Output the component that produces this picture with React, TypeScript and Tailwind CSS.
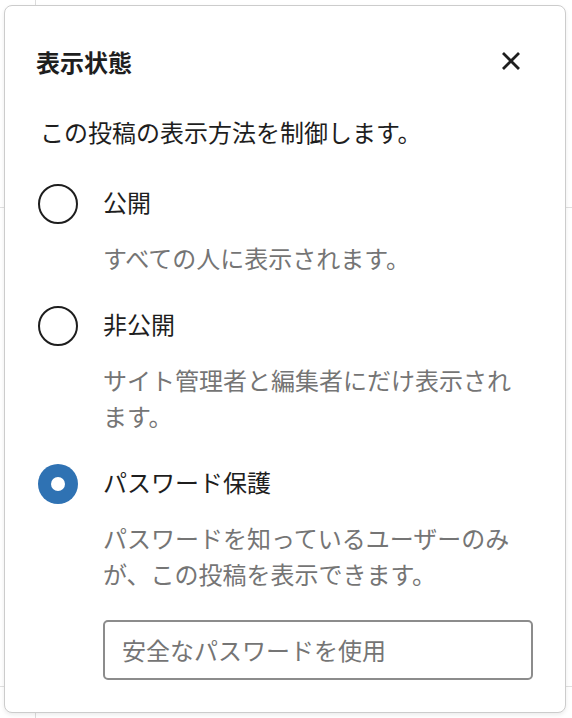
import React from "react";

const jp = { fontFamily: '"Noto Sans CJK JP", "Noto Sans", sans-serif' };

type Option = { label: string; desc: string; checked?: boolean };

const options: Option[] = [
  { label: "公開", desc: "すべての人に表示されます。" },
  { label: "非公開", desc: "サイト管理者と編集者にだけ表示されます。" },
  { label: "パスワード保護", desc: "パスワードを知っているユーザーのみが、この投稿を表示できます。", checked: true },
];

function Radio({ checked }: { checked?: boolean }) {
  if (checked) {
    return (
      <span className="w-10 h-10 rounded-full bg-[#2f72b3] flex items-center justify-center shrink-0">
        <span className="w-[14px] h-[14px] rounded-full bg-white" />
      </span>
    );
  }
  return <span className="w-10 h-10 rounded-full border-2 border-[#1e1e1e] bg-white shrink-0" />;
}

export default function App() {
  return (
    <div className="relative w-[572px] h-[718px] bg-white overflow-hidden" style={jp}>
      {/* faint editor lines behind the popover */}
      <div className="absolute left-[35px] top-0 w-px h-full bg-[#dcdcdc]" />
      <div className="absolute left-0 top-[207px] w-full h-px bg-[#e0e0e0]" />
      <div className="absolute left-0 top-[686px] w-full h-px bg-[#e0e0e0]" />

      <div className="relative mt-[5px] ml-[4px] w-[562px] h-[708px] bg-white border border-[#cccccc] rounded-lg shadow-[0_2px_4px_rgba(0,0,0,0.08)] px-8 pt-8">
        <div className="flex items-center justify-between h-12">
          <h2 className="text-[24px] font-semibold text-[#1e1e1e] -ml-px">表示状態</h2>
          <button className="w-12 h-12 flex items-center justify-center -mr-[2px] -mt-[2px]">
            <svg width="20" height="20" viewBox="0 0 20 20" fill="none">
              <path d="M2 2L18 18M18 2L2 18" stroke="#1e1e1e" strokeWidth="2.8" />
            </svg>
          </button>
        </div>

        <p className="mt-7 text-[24px] leading-9 text-[#1e1e1e] ml-[3px]">この投稿の表示方法を制御します。</p>

        <div className="mt-[34px] flex flex-col gap-[30px]">
          {options.map((o) => (
            <div key={o.label} className="flex flex-col">
              <label className="flex items-center gap-[25px] pl-px">
                <Radio checked={o.checked} />
                <span className="text-[24px] leading-9 text-[#1e1e1e] -mt-[4px]">{o.label}</span>
              </label>
              <p className="mt-4 pl-[66px] text-[24px] leading-9 text-[#757575]">{o.desc}</p>
            </div>
          ))}
        </div>

        <div className="mt-[28px] pl-[66px]">
          <div className="h-[60px] border-2 border-[#8c8c8c] rounded-[5px] flex items-center px-[17px]">
            <span className="text-[24px] text-[#757575]">安全なパスワードを使用</span>
          </div>
        </div>
      </div>
    </div>
  );
}
